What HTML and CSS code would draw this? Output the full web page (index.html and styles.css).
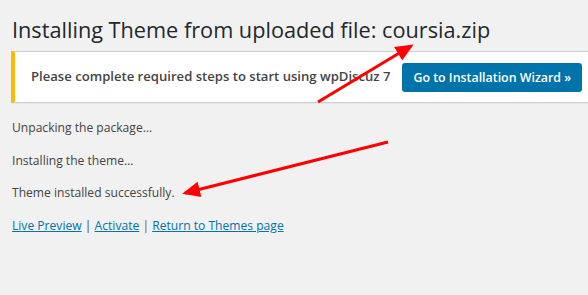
FILE: index.html
```html
<!DOCTYPE html>
<html lang="en">
<head>
    <meta charset="UTF-8">
    <meta name="viewport" content="width=device-width, initial-scale=1.0">
    <link rel="stylesheet" href="styles.css">
</head>
<body>
    <div class="wrap">
        <h1>Installing Theme from uploaded file: coursia.zip</h1>

        <div class="notice">
            <p>Please complete required steps to start using wpDiscuz 7</p>
            <a class="button" href="#">Go to Installation Wizard &raquo;</a>
        </div>

        <p>Unpacking the package&hellip;</p>
        <p>Installing the theme&hellip;</p>
        <p>Theme installed successfully.</p>
        <p class="actions">
            <a href="#">Live Preview</a> <span class="sep">|</span>
            <a href="#">Activate</a> <span class="sep visited">|</span>
            <a href="#">Return to Themes page</a>
        </p>
    </div>

    <!-- annotation arrows drawn over the screenshot -->
    <svg class="arrows" width="588" height="295" viewBox="0 0 588 295">
        <defs>
            <marker id="head" markerWidth="6" markerHeight="6" refX="5" refY="3" orient="auto" markerUnits="strokeWidth">
                <path d="M0,0.4 L6,3 L0,5.6 Z" fill="#ff0000"/>
            </marker>
        </defs>
        <line x1="318" y1="102" x2="411" y2="46" stroke="#ff0000" stroke-width="3" marker-end="url(#head)"/>
        <line x1="388" y1="142" x2="185" y2="193" stroke="#ff0000" stroke-width="3" marker-end="url(#head)"/>
    </svg>
</body>
</html>
```

FILE: styles.css
```css
:root {
    --bg: #f1f1f1;
    --text: #444444;
    --heading: #23282d;
    --link: #0073aa;
    --warning: #ffb900;
}

* {
    box-sizing: border-box;
}

html, body {
    margin: 0;
    padding: 0;
    height: 100%;
    overflow: hidden;
}

body {
    background: var(--bg);
    color: var(--text);
    font-family: 'Open Sans', 'Noto Sans', sans-serif;
    font-size: 12.1px;
    line-height: 19.5px;
    position: relative;
}

.wrap {
    padding: 10px 0 0 11px;
    margin-right: -20px;
}

h1 {
    margin: 0;
    padding: 6px 0 4px 1px;
    font-size: 21.7px;
    font-weight: 400;
    line-height: 1.3;
    color: var(--heading);
}

p {
    margin: 13px 0 0;
    padding-left: 1px;
}

.notice {
    display: flex;
    align-items: center;
    gap: 12px;
    margin: 3px 0 15px;
    height: 52px;
    background: #ffffff;
    border: 1px solid #ccd0d4;
    border-left: 4px solid var(--warning);
    box-shadow: 0 1px 1px rgba(0, 0, 0, 0.04);
    padding: 0 15px;
}

.notice p {
    margin: 0;
    font-size: 13.1px;
    font-weight: 600;
    color: var(--text);
}

.button {
    display: inline-block;
    background: var(--link);
    color: #ffffff;
    font-size: 12.4px;
    font-weight: 600;
    text-decoration: none;
    padding: 0 11px;
    line-height: 29px;
    border-radius: 3px;
}

.actions a {
    color: var(--link);
}

.sep {
    color: var(--text);
}

.sep.visited {
    color: #7c3a83;
}

.arrows {
    position: absolute;
    top: 0;
    left: 0;
    pointer-events: none;
}
```
